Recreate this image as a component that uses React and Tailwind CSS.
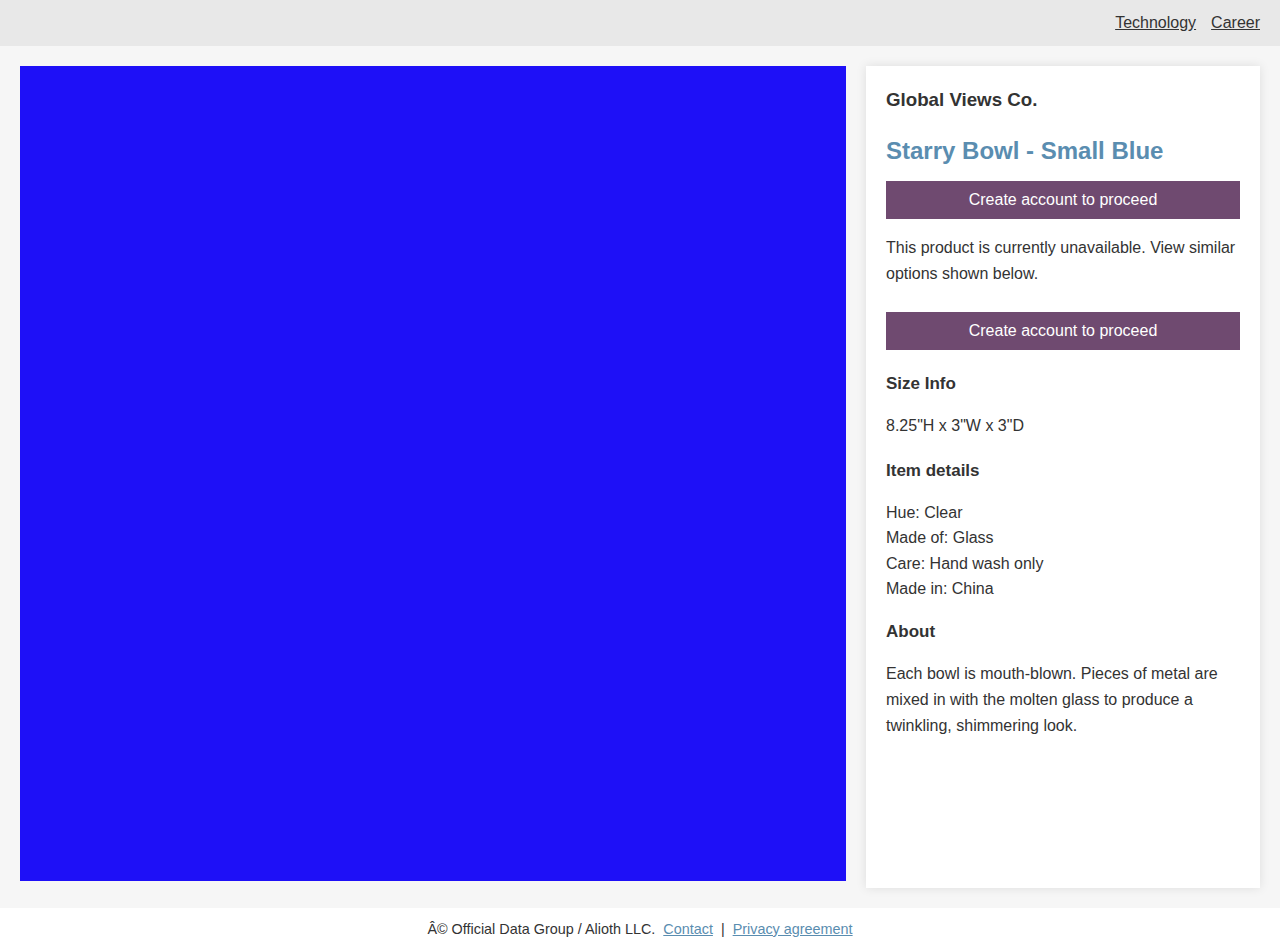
export default function App() {
  const font = { fontFamily: '"Liberation Sans", Arial, sans-serif' };
  return (
    <div style={font} className="min-h-[951px] flex flex-col bg-[#f6f6f6] text-[#333]">
      <header className="h-[46px] bg-[#e8e8e8] flex items-center justify-end gap-[15px] pr-[20px] text-[16px]">
        <a href="#" className="underline text-[#333]">Technology</a>
        <a href="#" className="underline text-[#333]">Career</a>
      </header>
      <main className="flex items-start gap-[20px] px-[20px] pt-[20px] pb-[20px]">
        <div className="w-[826px] h-[815px] bg-[#1e10f7] shrink-0" />
        <div className="w-[394px] h-[822px] bg-white shadow-[0_0_10px_rgba(0,0,0,0.1)] px-[20px] pt-[20px]">
          <h3 className="text-[18.72px] leading-[27px] font-bold">Global Views Co.</h3>
          <h2 className="mt-[23px] text-[24px] leading-[30px] font-bold text-[#5a8db0]">Starry Bowl - Small Blue</h2>
          <button className="mt-[15px] w-full h-[38px] bg-[#6f4a70] text-white text-[16px] flex items-center justify-center">Create account to proceed</button>
          <p className="mt-[16px] text-[16px] leading-[25.6px]">This product is currently unavailable. View similar options shown below.</p>
          <button className="mt-[26px] w-full h-[38px] bg-[#6f4a70] text-white text-[16px] flex items-center justify-center">Create account to proceed</button>
          <h4 className="mt-[20px] text-[17px] leading-[27px] font-bold">Size Info</h4>
          <p className="mt-[16px] text-[16px] leading-[25.6px]">8.25"H x 3"W x 3"D</p>
          <h4 className="mt-[18px] text-[17px] leading-[27px] font-bold">Item details</h4>
          <div className="mt-[16px] text-[16px] leading-[25.4px]">
            <div>Hue: Clear</div>
            <div>Made of: Glass</div>
            <div>Care: Hand wash only</div>
            <div>Made in: China</div>
          </div>
          <h4 className="mt-[17px] text-[17px] leading-[27px] font-bold">About</h4>
          <p className="mt-[16px] text-[16px] leading-[25.6px]">Each bowl is mouth-blown. Pieces of metal are mixed in with the molten glass to produce a twinkling, shimmering look.</p>
        </div>
      </main>
      <footer className="h-[43px] bg-white flex items-center justify-center text-[14.4px] text-[#333] whitespace-pre">
        <span>Â© Official Data Group / Alioth LLC.  </span>
        <a href="#" className="underline text-[#5a8db0]">Contact</a>
        <span>  |  </span>
        <a href="#" className="underline text-[#5a8db0]">Privacy agreement</a>
      </footer>
    </div>
  );
}
